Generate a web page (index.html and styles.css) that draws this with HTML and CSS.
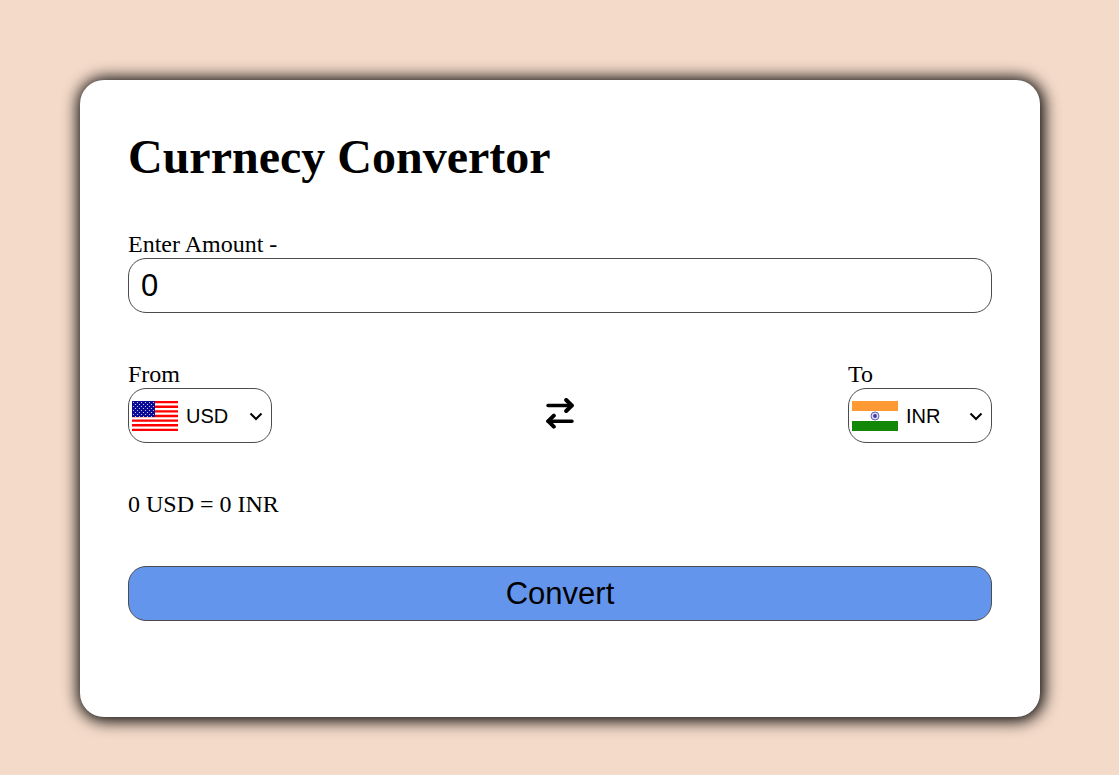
FILE: index.html
```html
<!DOCTYPE html>
<html lang="en">
<head>
  <meta charset="utf-8">
  <meta name="viewport" content="width=device-width, initial-scale=1">
  <title>Currnecy Convertor</title>
  <link rel="stylesheet" href="styles.css">
</head>
<body>
  <main class="card">
    <h1 class="title">Currnecy Convertor</h1>
    <form class="form">
      <div class="field">
        <label for="amount">Enter Amount -</label>
        <input class="control amount" id="amount" type="text" inputmode="decimal" value="0">
      </div>
      <div class="currencies">
        <div class="field">
          <label for="from">From</label>
          <div class="control picker">
            <svg class="flag" viewBox="0 0 46 30" preserveAspectRatio="none" aria-hidden="true">
              <defs>
                <pattern id="stars" width="4" height="4" patternUnits="userSpaceOnUse">
                  <circle cx="1.500" cy="1.500" r=".6" fill="#d8d8f0"/>
                  <circle cx="3.500" cy="3.500" r=".6" fill="#d8d8f0"/>
                </pattern>
              </defs>
              <path fill="#fff" d="M0 0h46v30H0z"/>
              <path stroke="#f00" stroke-width="2.31" d="M0 1.15h46M0 5.77h46M0 10.38h46M0 15h46M0 19.62h46M0 24.23h46M0 28.85h46"/>
              <path fill="#0a0a96" d="M0 0h23v16H0z"/>
              <path fill="url(#stars)" d="M0 0h23v16H0z"/>
            </svg>
            <select class="select" id="from">
              <option>USD</option>
              <option>INR</option>
            </select>
            <svg class="chevron" viewBox="0 0 16 16" aria-hidden="true"><path d="M2.500 5.500 8 11l5.500-5.500"/></svg>
          </div>
        </div>
        <svg class="swap" viewBox="0 0 32 32" aria-hidden="true">
          <path stroke-width="3.500" d="M4 7.500h24M28 23.200H4"/>
          <path d="M22.200 2l5.500 5.500-5.500 5.500M9.800 17.700l-5.500 5.500 5.500 5.500"/>
        </svg>
        <div class="field">
          <label for="to">To</label>
          <div class="control picker">
            <svg class="flag" viewBox="0 0 46 30" preserveAspectRatio="none" aria-hidden="true">
              <path fill="#fff" d="M0 0h46v30H0z"/>
              <path fill="#f93" d="M0 0h46v10H0z"/>
              <path fill="#138808" d="M0 20h46v10H0z"/>
              <circle cx="23" cy="15" r="4" fill="#dcdcf2" stroke="#6464ba"/>
              <circle cx="23" cy="15" r="1.900" fill="#3c3ca4"/>
            </svg>
            <select class="select" id="to">
              <option>INR</option>
              <option>USD</option>
            </select>
            <svg class="chevron" viewBox="0 0 16 16" aria-hidden="true"><path d="M2.500 5.500 8 11l5.500-5.500"/></svg>
          </div>
        </div>
      </div>
      <output class="result" for="amount from to">0 USD = 0 INR</output>
      <button class="control convert" type="button">Convert</button>
    </form>
  </main>
</body>
</html>
```
FILE: styles.css
```css
* {
  box-sizing: border-box;
}

body {
  margin: 0;
  padding: 80px 24px 48px 25px;
  background: #f4dac9;
  color: #000;
  font: 24px/27px "Liberation Serif", "Times New Roman", serif;
}

.card {
  max-width: 960px;
  margin: 0 auto;
  padding: 48px 48px 96px;
  border-radius: 24px;
  background: #fff;
  box-shadow: 1px 1px 16px 3px #000;
}

.title {
  margin: 0 0 46px;
  font-size: 48px;
  line-height: 57px;
}

.form {
  display: flex;
  flex-direction: column;
  gap: 48px;
}

.field {
  display: flex;
  flex-direction: column;
}

.control {
  width: 100%;
  height: 55px;
  border: 1px solid #4c4c4c;
  border-radius: 18px;
  background: #fff;
  color: #000;
  font-family: "Liberation Sans", Arial, sans-serif;
  font-size: 31px;
}

.amount {
  padding: 0 12px;
}

.currencies {
  display: flex;
  justify-content: space-between;
  align-items: center;
}

.picker {
  display: grid;
  grid-template-columns: 46px 1fr 16px;
  align-items: center;
  width: 144px;
  padding: 0 7px 0 3px;
}

.flag {
  width: 46px;
  height: 30px;
}

.select {
  grid-area: 1 / 2 / 2 / 4;
  appearance: none;
  height: 100%;
  padding: 0 16px 0 8px;
  border: 0;
  background: transparent;
  color: inherit;
  font-family: inherit;
  font-size: 20px;
}

.chevron {
  grid-area: 1 / 3;
  width: 16px;
  height: 16px;
  fill: none;
  stroke: #000;
  stroke-width: 2;
  pointer-events: none;
}

.swap {
  width: 32px;
  height: 32px;
  margin-top: 24px;
  fill: none;
  stroke: #000;
  stroke-width: 4;
  stroke-linecap: round;
  stroke-linejoin: round;
}

.convert {
  background: #6495ed;
  cursor: pointer;
}
```
